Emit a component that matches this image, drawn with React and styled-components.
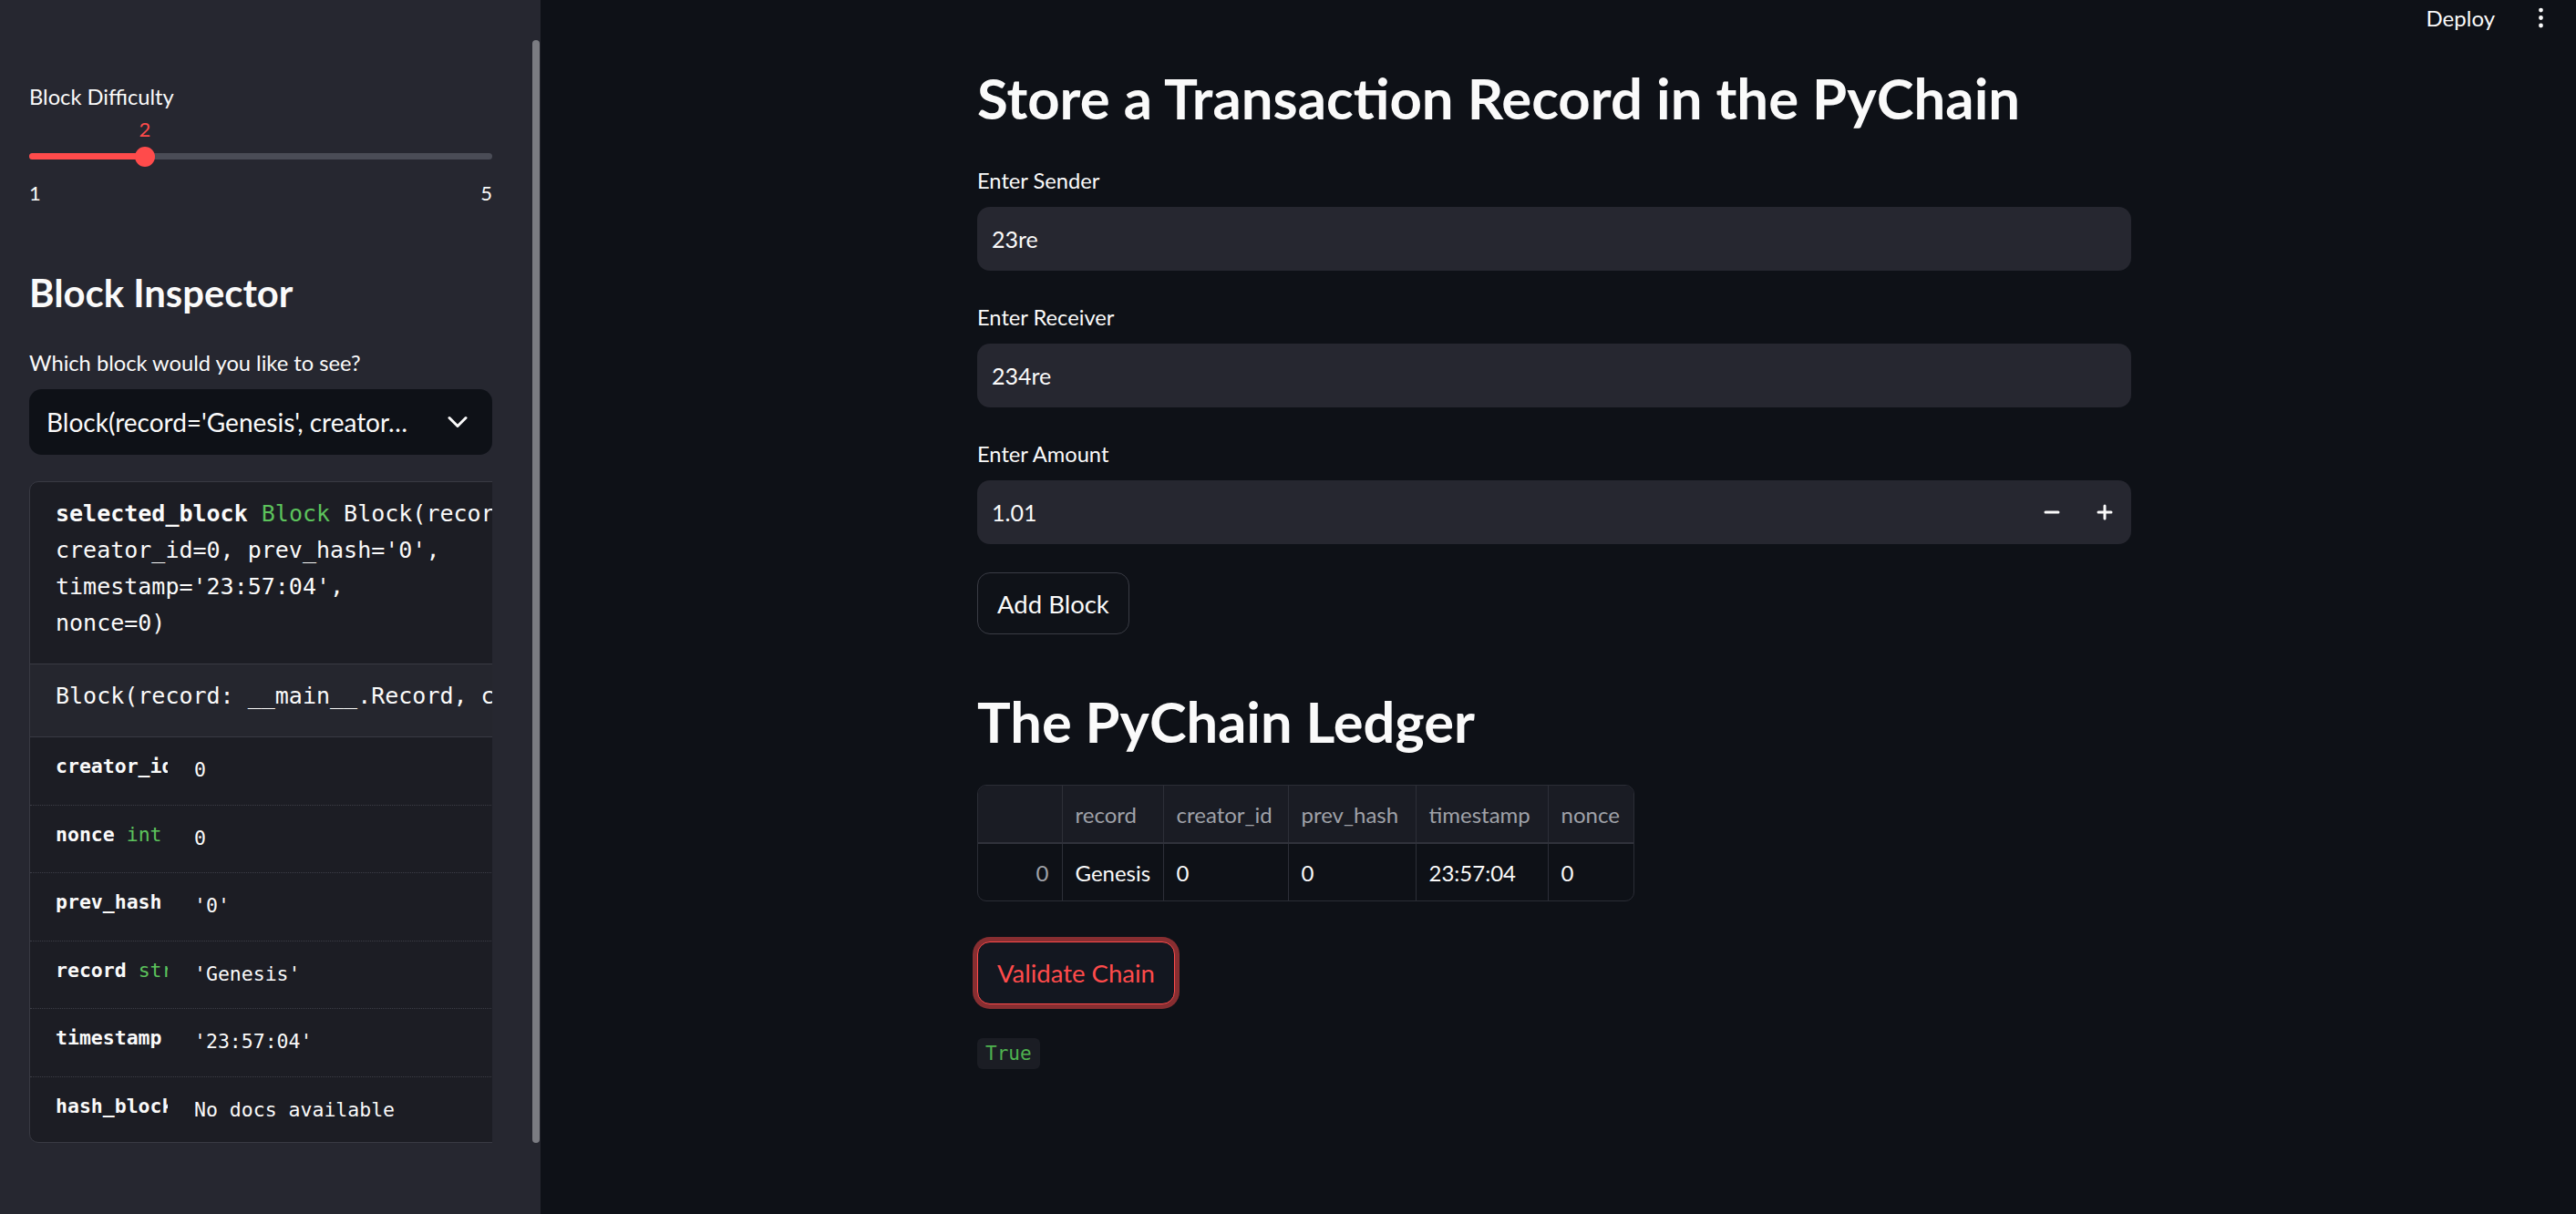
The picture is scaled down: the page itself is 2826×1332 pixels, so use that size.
import styled, { createGlobalStyle } from "styled-components";
import { ChevronDown, Minus, Plus, EllipsisVertical } from "lucide-react";

const fields = [
  { label: "Enter Sender", value: "23re" },
  { label: "Enter Receiver", value: "234re" },
  { label: "Enter Amount", value: "1.01", number: true },
];

const inspectorRows = [
  { name: "creator_id", type: "int", value: "0" },
  { name: "nonce", type: "int", value: "0" },
  { name: "prev_hash", type: "str", value: "'0'" },
  { name: "record", type: "str", value: "'Genesis'" },
  { name: "timestamp", type: "str", value: "'23:57:04'" },
  { name: "hash_block", type: "method", value: "No docs available" },
];

const columns = [
  { title: "", width: 92 },
  { title: "record", width: 111 },
  { title: "creator_id", width: 137 },
  { title: "prev_hash", width: 140 },
  { title: "timestamp", width: 145 },
  { title: "nonce", width: 94 },
];

const ledger = [["0", "Genesis", "0", "0", "23:57:04", "0"]];

const difficulty = { min: 1, max: 5, value: 2 };

export default function App() {
  const pct = ((difficulty.value - difficulty.min) / (difficulty.max - difficulty.min)) * 100;
  return (
    <>
      <GlobalStyle />
      <Page>
        <Sidebar>
          <SidebarContent>
            <Label>Block Difficulty</Label>
            <SliderWrap>
              <SliderValue style={{ left: `${pct}%` }}>{difficulty.value}</SliderValue>
              <Track>
                <TrackFill style={{ width: `${pct}%` }} />
                <Thumb style={{ left: `${pct}%` }} />
              </Track>
            </SliderWrap>
            <Ticks>
              <span>{difficulty.min}</span>
              <span>{difficulty.max}</span>
            </Ticks>

            <SideHeading>Block Inspector</SideHeading>
            <Label>Which block would you like to see?</Label>
            <Select>
              <span>Block(record='Genesis', creator…</span>
              <ChevronDown size={36} strokeWidth={2} />
            </Select>

            <DocClip>
              <DocBox>
                <DocHead>
                  <Strong>selected_block</Strong> <Green>Block</Green> Block(record='Genesis',
                  <br />
                  creator_id=0, prev_hash='0',
                  <br />
                  timestamp='23:57:04',
                  <br />
                  nonce=0)
                </DocHead>
                <DocSig>Block(record: __main__.Record, creator_id: int, prev_hash: str = '0')</DocSig>
                {inspectorRows.map((r) => (
                  <DocRow key={r.name}>
                    <DocKey>
                      {r.name} <Green $regular>{r.type}</Green>
                    </DocKey>
                    <DocValue>{r.value}</DocValue>
                  </DocRow>
                ))}
              </DocBox>
            </DocClip>
          </SidebarContent>
          <ScrollThumb />
        </Sidebar>

        <Main>
          <Header>
            <Deploy>Deploy</Deploy>
            <EllipsisVertical size={29} strokeWidth={2} />
          </Header>
          <Content>
            <Title>Store a Transaction Record in the PyChain</Title>
            {fields.map((f) => (
              <Field key={f.label}>
                <Label>{f.label}</Label>
                <Input>
                  <span>{f.value}</span>
                  {f.number && (
                    <Steppers>
                      <Step>
                        <Minus size={24} strokeWidth={3} />
                      </Step>
                      <Step>
                        <Plus size={24} strokeWidth={3} />
                      </Step>
                    </Steppers>
                  )}
                </Input>
              </Field>
            ))}
            <Button>Add Block</Button>

            <SectionTitle>The PyChain Ledger</SectionTitle>
            <TableWrap>
              <Table>
                <colgroup>
                  {columns.map((c, i) => (
                    <Col key={i} $w={c.width} />
                  ))}
                </colgroup>
                <thead>
                  <tr>
                    {columns.map((c, i) => (
                      <Th key={i}>{c.title}</Th>
                    ))}
                  </tr>
                </thead>
                <tbody>
                  {ledger.map((row, ri) => (
                    <tr key={ri}>
                      {row.map((cell, ci) => (
                        <Td key={ci} $index={ci === 0}>
                          {cell}
                        </Td>
                      ))}
                    </tr>
                  ))}
                </tbody>
              </Table>
            </TableWrap>

            <Button $primary>Validate Chain</Button>
            <Result>True</Result>
          </Content>
        </Main>
      </Page>
    </>
  );
}

const GlobalStyle = createGlobalStyle`
  html, body {
    margin: 0;
    padding: 0;
    background: #0e1117;
  }
  body {
    font-family: Lato, "Noto Sans", sans-serif;
    color: #fafafa;
  }
  * {
    box-sizing: border-box;
  }
`;

const mono = `"DejaVu Sans Mono", "Liberation Mono", monospace`;

const Page = styled.div`
  display: flex;
  height: 1332px;
  overflow: hidden;
`;

const Sidebar = styled.aside`
  position: relative;
  width: 593px;
  flex-shrink: 0;
  background: #262730;
`;

const SidebarContent = styled.div`
  padding: 86px 53px 0 32px;
  display: flex;
  flex-direction: column;
`;

const ScrollThumb = styled.div`
  position: absolute;
  top: 44px;
  right: 1px;
  width: 8px;
  height: 1210px;
  border-radius: 4px;
  background: #7b7c82;
`;

const Label = styled.div`
  font-size: 23.7px;
  line-height: 40px;
  height: 40px;
  margin-bottom: 9px;
  color: #fafafa;
`;

const SliderWrap = styled.div`
  position: relative;
  padding-top: 42px;
  margin-top: -9px;
`;

const SliderValue = styled.div`
  position: absolute;
  top: 5px;
  transform: translateX(-50%);
  font-size: 22px;
  line-height: 22px;
  color: #ff4b4b;
`;

const Track = styled.div`
  position: relative;
  height: 7px;
  border-radius: 4px;
  background: #4a4c56;
`;

const TrackFill = styled.div`
  height: 100%;
  border-radius: 4px;
  background: #ff4b4b;
`;

const Thumb = styled.div`
  position: absolute;
  top: 50%;
  width: 22px;
  height: 22px;
  border-radius: 50%;
  background: #ff4b4b;
  transform: translate(-50%, -50%);
`;

const Ticks = styled.div`
  display: flex;
  justify-content: space-between;
  margin-top: 22px;
  font-size: 22px;
  line-height: 30px;
`;

const SideHeading = styled.h2`
  margin: 68px 0 31px;
  font-size: 41.8px;
  line-height: 52px;
  font-weight: 700;
`;

const Select = styled.div`
  display: flex;
  align-items: center;
  justify-content: space-between;
  height: 72px;
  padding: 0 20px 0 19px;
  border-radius: 14px;
  background: #0e1117;
  font-size: 28px;
`;

const DocClip = styled.div`
  margin-top: 29px;
  overflow: hidden;
`;

const DocBox = styled.div`
  width: 900px;
  border: 1px solid #393a43;
  border-radius: 10px;
  background: #1c1d24;
  font-family: ${mono};
  overflow: hidden;
`;

const DocHead = styled.div`
  padding: 15px 28px 24px;
  font-size: 25px;
  line-height: 40px;
  white-space: nowrap;
  border-bottom: 1px solid #393a43;
`;

const DocSig = styled(DocHead)`
  background: #25262e;
`;

const Strong = styled.span`
  font-weight: 700;
`;

const Green = styled.span`
  color: #5cc35c;
  font-weight: ${(p) => (p.$regular ? 400 : "inherit")};
`;

const DocRow = styled.div`
  display: grid;
  grid-template-columns: 123px 1fr;
  column-gap: 29px;
  height: 74.6px;
  padding: 0 28px;
  font-size: 21.5px;
  line-height: 30px;
  border-bottom: 1px dotted #3c3d46;
  &:last-child {
    height: 71px;
    border-bottom: none;
  }
`;

const DocKey = styled.div`
  padding-top: 17px;
  font-weight: 700;
  white-space: nowrap;
  overflow: hidden;
`;

const DocValue = styled.div`
  padding-top: 21px;
  white-space: nowrap;
`;

const Main = styled.main`
  flex: 1;
  display: flex;
  flex-direction: column;
`;

const Header = styled.header`
  display: flex;
  align-items: center;
  justify-content: flex-end;
  gap: 36px;
  height: 38px;
  padding-right: 24px;
  color: #fafafa;
`;

const Deploy = styled.span`
  font-size: 24px;
`;

const Content = styled.div`
  width: 1745px;
  padding: 29px 0 0 479px;
  display: flex;
  flex-direction: column;
  align-items: flex-start;
`;

const Title = styled.h1`
  margin: 0 0 31px;
  font-size: 61.7px;
  line-height: 80px;
  font-weight: 700;
`;

const Field = styled.div`
  width: 1266px;
  margin-bottom: 31px;
`;

const Input = styled.div`
  display: flex;
  align-items: center;
  justify-content: space-between;
  height: 70px;
  padding-left: 16px;
  border-radius: 14px;
  background: #262730;
  font-size: 25px;
`;

const Steppers = styled.div`
  display: flex;
  height: 100%;
`;

const Step = styled.div`
  display: flex;
  align-items: center;
  justify-content: center;
  width: 58px;
  height: 100%;
`;

const Button = styled.div`
  display: inline-flex;
  align-items: center;
  justify-content: center;
  height: ${(p) => (p.$primary ? "69px" : "68px")};
  padding: 0 21px;
  margin-top: ${(p) => (p.$primary ? "44px" : "0")};
  border: 1px solid ${(p) => (p.$primary ? "#ff4b4b" : "#3a3c45")};
  border-radius: 14px;
  background: ${(p) => (p.$primary ? "#131720" : "#0f1218")};
  color: ${(p) => (p.$primary ? "#ff4b4b" : "#fafafa")};
  box-shadow: ${(p) => (p.$primary ? "0 0 0 5px rgba(255, 75, 75, 0.5)" : "none")};
  font-size: 27.5px;
`;

const SectionTitle = styled.h2`
  margin: 59px 0 34px;
  font-size: 61.4px;
  line-height: 72px;
  font-weight: 700;
`;

const TableWrap = styled.div`
  border: 1px solid #2b2d36;
  border-radius: 10px;
  overflow: hidden;
`;

const Table = styled.table`
  border-collapse: collapse;
  table-layout: fixed;
  width: 717px;
  font-size: 24px;
`;

const Col = styled.col`
  width: ${(p) => p.$w}px;
`;

const Th = styled.th`
  height: 63px;
  padding: 0 14px;
  background: #1a1c24;
  color: #9fa1a8;
  font-weight: 400;
  text-align: left;
  border-left: 1px solid #2d2f38;
  border-bottom: 2px solid #30323b;
  white-space: nowrap;
  &:first-child {
    border-left: none;
  }
`;

const Td = styled.td`
  height: 63px;
  padding: 0 14px;
  text-align: ${(p) => (p.$index ? "right" : "left")};
  color: ${(p) => (p.$index ? "#9fa1a8" : "#fafafa")};
  border-left: 1px solid #2d2f38;
  white-space: nowrap;
  &:first-child {
    border-left: none;
  }
`;

const Result = styled.code`
  margin-top: 37px;
  height: 34px;
  padding: 0 9px;
  border-radius: 6px;
  background: #1b1d24;
  color: #4fb24f;
  font-family: ${mono};
  font-size: 21px;
  line-height: 34px;
`;
